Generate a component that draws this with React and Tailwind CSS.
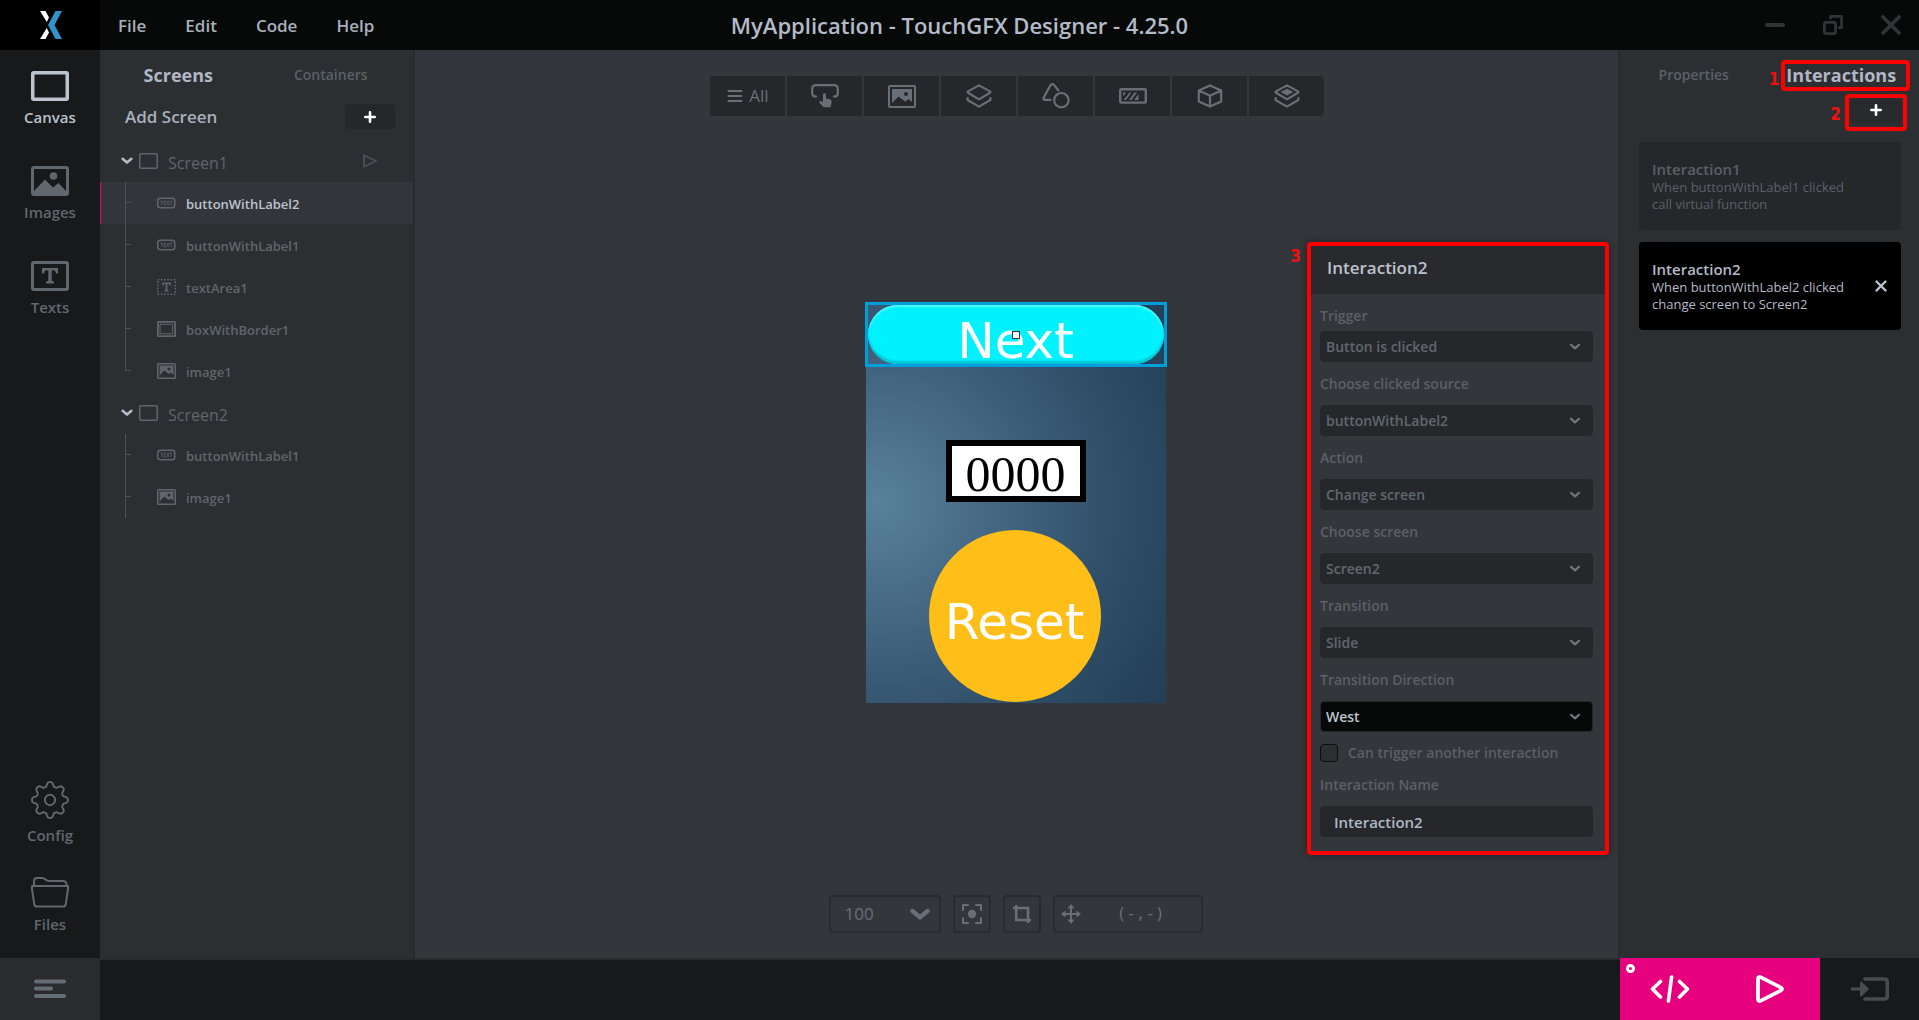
import React from 'react';

const gearPath = (() => {
  const pts = [];
  for (let i = 0; i < 160; i++) {
    const t = (i / 160) * Math.PI * 2;
    const w = Math.cos(8 * t);
    const r = 16.2 + 2.4 * Math.tanh(1.6 * w);
    pts.push(`${(20 + r * Math.sin(t)).toFixed(2)} ${(20 - r * Math.cos(t)).toFixed(2)}`);
  }
  return `M${pts.join('L')}Z`;
})();

function Svg({ w, h, children, className = '' }) {
  return (
    <svg width={w} height={h} viewBox={`0 0 ${w} ${h}`} fill="none" stroke="currentColor" strokeWidth="2" strokeLinecap="round" strokeLinejoin="round" className={`shrink-0 ${className}`} aria-hidden="true">
      {children}
    </svg>
  );
}

const Logo = () => (
  <Svg w={22} h={28}>
    <g stroke="none">
      <path d="M0 0H5.5L9 6.5L6.8 11L0 0Z" fill="#fff" />
      <path d="M0 28H5.5L9 21.5L6.8 17L0 28Z" fill="#fff" />
      <path d="M15.5 0H22L14.5 14L22 28H15.5L8 14Z" fill="#2f94cc" />
    </g>
  </Svg>
);

const CanvasIcon = () => (
  <Svg w={38} h={30}><rect x="1.75" y="1.75" width="34.5" height="26.5" rx="1" strokeWidth="3.5" /></Svg>
);
const ImageIcon = () => (
  <Svg w={38} h={30}>
    <rect x="1.5" y="1.5" width="35" height="27" rx="1.5" strokeWidth="3" />
    <circle cx="22.5" cy="10" r="3.8" fill="currentColor" stroke="none" />
    <path d="M3 25L14 13.5L22 21.5L27.5 17L35 25V28H3Z" fill="currentColor" stroke="none" />
  </Svg>
);
const TextIcon = () => (
  <Svg w={38} h={30}>
    <rect x="1.5" y="1.5" width="35" height="27" rx="1.5" strokeWidth="3" />
    <path d="M11 7H27V12.5H25L24 9.5H20.7V20L23 20.6V22.5H15V20.6L17.3 20V9.5H14L13 12.5H11Z" fill="currentColor" stroke="none" />
  </Svg>
);
const GearIcon = () => (
  <svg width="38" height="38" viewBox="0.5 0.5 39 39" fill="none" stroke="currentColor" strokeWidth="2" aria-hidden="true">
    <path d={gearPath} strokeLinejoin="round" />
    <circle cx="20" cy="20" r="5.3" />
  </svg>
);
const FolderIcon = () => (
  <Svg w={38} h={31}>
    <path d="M3 9V4Q3 1 6 1H11Q13 1 14.5 2.5T18 4H32Q35 4 35.5 7V9" />
    <path d="M1 9H37V12L34.8 27Q34.4 29.6 32 29.6H6Q3.6 29.6 3.2 27L1 12Z" />
  </Svg>
);
const PlusIcon = () => (
  <Svg w={12} h={12}><path d="M6 1.3V10.7M1.3 6H10.7" strokeWidth="2.6" /></Svg>
);
const ChevronWide = () => (
  <Svg w={12} h={8}><path d="M1.6 1.8L6 5.6L10.4 1.8" strokeWidth="2.6" /></Svg>
);
const ChevronSmall = () => (
  <Svg w={12} h={8} className="pointer-events-none"><path d="M2 1.8L6 5.4L10 1.8" strokeWidth="2.2" /></Svg>
);
const ScreenIcon = () => (
  <Svg w={19} h={16}><rect x=".75" y=".75" width="17.5" height="14.5" rx="1" strokeWidth="1.5" /></Svg>
);
const PlayIcon = () => (
  <Svg w={14} h={14}><path d="M1 1.2L13 7L1 12.8Z" strokeWidth="1.8" /></Svg>
);

const treeIcons = {
  button: (
    <Svg w={19} h={16}>
      <rect x=".75" y="3.25" width="17" height="9.5" rx="2.5" strokeWidth="1.5" />
      <g strokeWidth=".8" strokeLinecap="butt">
        <path d="M3.5 6.1H6.1M4.8 6.1V10.1" />
        <path d="M8.9 6.1H7.1V9.9H8.9M7.1 8H8.6" />
        <path d="M9.8 5.9L12 10.1M12 5.9L9.8 10.1" />
        <path d="M12.7 6.1H15.3M14 6.1V10.1" />
      </g>
    </Svg>
  ),
  text: (
    <Svg w={19} h={16}>
      <rect x=".75" y=".75" width="17.5" height="14.5" strokeWidth="1.5" strokeDasharray="1.6 1.6" strokeLinecap="butt" />
      <path d="M5.3 3.6H13.7V6.4H12.5L12 5H10.4V11L11.6 11.4V12.4H7.4V11.4L8.6 11V5H7L6.5 6.4H5.3Z" fill="currentColor" stroke="none" />
    </Svg>
  ),
  box: (
    <Svg w={19} h={16}>
      <rect x=".9" y=".9" width="17.2" height="14.2" rx=".6" strokeWidth="1.8" />
      <rect x="3.4" y="3.3" width="12.2" height="9.4" strokeWidth="1" />
    </Svg>
  ),
  image: (
    <Svg w={19} h={16}>
      <rect x=".75" y=".75" width="17.5" height="14.5" rx=".8" strokeWidth="1.5" />
      <path fillRule="evenodd" d="M2.6 2.6H16.4V12L13.6 9.4L11.8 11L7.2 7.6L2.6 12.4ZM12 4.6A1.5 1.5 0 1 0 12 7.6A1.5 1.5 0 1 0 12 4.6Z" fill="currentColor" stroke="none" />
    </Svg>
  ),
};

const toolbarIcons = [
  ['Buttons', (
    <Svg w={28} h={24}>
      <path d="M5 12.6Q1.2 12.6 1.2 9.5V5Q1.2 1.2 5 1.2H23Q26.8 1.2 26.8 5V9.5Q26.8 12.6 23 12.6" strokeWidth="2.2" />
      <path d="M12 10Q13.5 8.4 15 10V14.4L19.6 15.6Q20.8 16 20.6 17.6L19.6 23.2H12.6L8.2 18.4Q8.4 16.8 10 17L12 18Z" fill="currentColor" stroke="none" />
    </Svg>
  )],
  ['Images', (
    <Svg w={28} h={23}>
      <rect x="1" y="1" width="26" height="21" rx="1" />
      <path fillRule="evenodd" d="M4 4H24V17L20.5 14L17.5 16.8L10.5 11.5L4 18ZM18 7A2 2 0 1 0 18 11A2 2 0 1 0 18 7Z" fill="currentColor" stroke="none" />
    </Svg>
  )],
  ['Containers', (
    <Svg w={26} h={24}>
      <path d="M13 1.4L24 7.4Q25 8 24 8.8L13 15.4L2 8.8Q1 8 2 7.4Z" strokeWidth="2.2" />
      <path d="M1.6 14V16L13 22.6L24.4 16V14" strokeWidth="2.2" />
    </Svg>
  )],
  ['Shapes', (
    <Svg w={28} h={26}>
      <path d="M16.4 7.5L12 1.9Q10.2 .4 8.6 2L1.6 14.8Q.8 16.9 3 16.9H8.6" strokeWidth="2.2" />
      <circle cx="19.4" cy="17.2" r="7.2" strokeWidth="2.2" />
    </Svg>
  )],
  ['Progress indicators', (
    <Svg w={28} h={16}>
      <rect x="1.2" y="1.2" width="25.6" height="13.4" rx="1.2" strokeWidth="2.4" />
      <path d="M4 4.5H7L4 8.5ZM10.5 4.5H12.5L7 12H4.6ZM15.4 4.5H18L12.4 12H10ZM19.5 6V12H15.2Z" fill="currentColor" stroke="none" />
    </Svg>
  )],
  ['Miscellaneous', (
    <Svg w={26} h={24}>
      <path d="M13 1.4L24.2 6.4V17.4L13 22.6L1.8 17.4V6.4ZM1.8 6.4L13 11.8L24.2 6.4M13 11.8V22.4" strokeWidth="2.2" />
    </Svg>
  )],
  ['Custom containers', (
    <Svg w={26} h={24}>
      <path d="M13 1.4L24 7.4Q25 8 24 8.8L13 15.4L2 8.8Q1 8 2 7.4Z" strokeWidth="2.2" />
      <path d="M13 4.8L19.4 8.1L13 11.6L6.6 8.1Z" fill="currentColor" stroke="none" />
      <path d="M1.6 14V16L13 22.6L24.4 16V14" strokeWidth="2.2" />
    </Svg>
  )],
];

function NavItem({ icon, label, active }) {
  return (
    <button className={`flex w-full flex-col items-center gap-1.5 ${active ? 'text-[#bcc3ce]' : 'text-[#60676e]'}`}>
      {icon}
      <span className="text-[15px]/[20px] font-semibold">{label}</span>
    </button>
  );
}

function ScreenRow({ name, play }) {
  return (
    <div className="flex h-[42px] items-center pr-9 pl-[21px] text-[#60656b]">
      <button aria-label={`Collapse ${name}`} className="text-[#b4bbc8]"><ChevronWide /></button>
      <span className="ml-1.5"><ScreenIcon /></span>
      <span className="ml-[10px] flex-1 pt-1 text-base/[20px]">{name}</span>
      {play && <button aria-label={`Run ${name}`} className="text-[#4b5056]"><PlayIcon /></button>}
    </div>
  );
}

function TreeRow({ kind, name, selected, end }) {
  return (
    <div className={`flex h-[42px] border-l ${selected ? 'border-[#e6007e] bg-[#33353a]' : 'border-transparent'}`}>
      <div className="ml-6 w-1.5 text-[#4b5056]">
        <div className="h-[21px] border-b border-l border-current" />
        <div className={`h-[21px] border-l ${end ? 'border-transparent' : 'border-current'}`} />
      </div>
      <div className="ml-[26px] flex items-center gap-[10px] text-[#60656b]">
        {treeIcons[kind]}
        <span className={`pt-0.5 text-[13px]/[18px] font-semibold ${selected ? 'text-[#bcc3ce]' : ''}`}>{name}</span>
      </div>
    </div>
  );
}

function SelectField({ id, label, value, tight, active }) {
  return (
    <div className="pt-3">
      <label htmlFor={id} className={`block text-sm/5 font-semibold text-[#5b6066] ${tight ? 'mb-[5px]' : 'mb-[11px]'}`}>{label}</label>
      <div className="relative flex items-center">
        <select id={id} defaultValue={value} className={`h-[31px] w-full appearance-none rounded border pl-[5px] text-sm font-semibold ${active ? 'border-[#26272b] bg-[#070908] text-[#bcc3ce]' : 'border-[#26272b] bg-[#26272b] text-[#60676e]'}`}>
          <option>{value}</option>
        </select>
        <span className="pointer-events-none absolute right-3 text-[#70777f]"><ChevronSmall /></span>
      </div>
    </div>
  );
}

function InteractionCard({ title, lines, active }) {
  return (
    <div className={`flex h-[88px] items-center justify-between rounded pr-[14px] pl-[13px] ${active ? 'bg-black text-[#b4bbc8]' : 'bg-[#26272b] text-[#5b6066]'}`}>
      <div>
        <h3 className="text-[15px]/[20px] font-semibold">{title}</h3>
        {lines.map((l) => <p key={l} className="text-[13px]/[17px]">{l}</p>)}
      </div>
      {active && (
        <button aria-label={`Delete ${title}`} className="text-[#bcc3ce]">
          <Svg w={12} h={12}><path d="M1.5 1.5L10.5 10.5M10.5 1.5L1.5 10.5" strokeWidth="2.4" /></Svg>
        </button>
      )}
    </div>
  );
}

function Callout({ n, className }) {
  return (
    <span className={`absolute right-full font-['DejaVu_Sans_Condensed','DejaVu_Sans',sans-serif] text-[17px]/[20px] font-bold text-[#f01010] ${className}`}>{n}</span>
  );
}

function Dialog() {
  return (
    <section className="absolute top-48 right-[9px] w-[302px] rounded-sm border-4 border-[#ff0000] bg-[#33363b] shadow-[0_0_8px_rgba(0,0,0,0.4)]">
      <Callout n="3" className="top-0 mr-[10px]" />
      <h2 className="flex h-12 items-center bg-[#292a2d] pb-1 pl-4 text-[17px]/[24px] font-semibold text-[#bcc3ce]">Interaction2</h2>
      <div className="pr-3 pb-[14px] pl-[9px]">
        <SelectField id="trigger" label="Trigger" value="Button is clicked" tight />
        <SelectField id="source" label="Choose clicked source" value="buttonWithLabel2" />
        <SelectField id="action" label="Action" value="Change screen" />
        <SelectField id="screen" label="Choose screen" value="Screen2" />
        <SelectField id="transition" label="Transition" value="Slide" />
        <SelectField id="direction" label="Transition Direction" value="West" active />
        <div className="flex items-center gap-[10px] pt-3">
          <input id="chain" type="checkbox" className="size-[18px] appearance-none rounded border border-[#0c0d0d] bg-[#2c2f32] checked:bg-[#e6007e]" />
          <label htmlFor="chain" className="text-sm/[18px] font-semibold text-[#5b6066]">Can trigger another interaction</label>
        </div>
        <label htmlFor="iname" className="mt-[13px] mb-[11px] block text-sm/5 font-semibold text-[#5b6066]">Interaction Name</label>
        <input id="iname" defaultValue="Interaction2" className="block h-[31px] w-full rounded bg-[#26272b] px-[14px] text-[15px] font-semibold text-[#b0b7c3]" />
      </div>
    </section>
  );
}

function Device() {
  return (
    <div className="relative h-[400px] w-[300px] bg-[radial-gradient(circle_at_4%_50%,#59819c_0%,#3b5c77_48%,#2d4c66_72%,#233e57_100%)]">
      <div className="absolute -top-px -left-px flex h-[65px] w-[302px] border-[3px] border-[#009fdc] font-['DejaVu_Sans',sans-serif]">
        <button className="flex-1 rounded-full bg-[#00f2ff] pt-2.5 text-[50px]/[52px] text-white shadow-[inset_0_-3px_2px_#00c4d4,inset_0_2px_2px_#55f7ff]">Next</button>
        <span className="absolute top-[26px] left-[144px] size-2 border border-[#333] bg-white" />
      </div>
      <div className="absolute top-[137px] left-20 flex h-[62px] w-[140px] items-center justify-center border-[6px] border-black bg-white pt-1.5 font-['Liberation_Serif',serif] text-[50px]/[50px] text-black">0000</div>
      <button className="absolute top-[227px] left-[63px] flex size-[172px] items-center justify-center rounded-full bg-[#ffbe18] pt-3 font-['DejaVu_Sans',sans-serif] text-[50px]/[60px] text-white">Reset</button>
    </div>
  );
}

export default function App() {
  return (
    <div className="flex h-screen flex-col overflow-hidden bg-[#17191a] font-['Open_Sans','Noto_Sans',sans-serif]">
      <header className="flex h-[50px] bg-[#070908] text-[#b4bbc8]">
        <div className="flex w-[100px] items-center justify-center bg-black pl-0.5"><Logo /></div>
        <div className="-ml-[100px] grid flex-1 grid-cols-[1fr_auto_1fr] items-center">
          <nav className="flex gap-[39px] pt-0.5 pl-[118px] text-[17px]/[24px] font-semibold text-[#a9b0bc]">
            <button>File</button><button>Edit</button><button>Code</button><button>Help</button>
          </nav>
          <h1 className="text-[22px]/[30px] font-semibold">MyApplication - TouchGFX Designer - 4.25.0</h1>
          <div className="flex justify-end gap-[38px] pr-[18px] text-[#303337]">
            <button aria-label="Minimize"><Svg w={20} h={20}><path d="M2 10H18" strokeWidth="4" /></Svg></button>
            <button aria-label="Restore"><Svg w={20} h={20}><rect x="1.4" y="7.4" width="11.2" height="11.2" rx="1.5" strokeWidth="2.8" /><path d="M7.5 3.5V1.4H18.6V12.6H16" strokeWidth="2.6" /></Svg></button>
            <button aria-label="Close"><Svg w={20} h={20}><path d="M2 2L18 18M18 2L2 18" strokeWidth="3.8" /></Svg></button>
          </div>
        </div>
      </header>

      <div className="flex min-h-0 flex-1">
        <nav className="flex w-[100px] flex-col justify-between bg-[#17191a] pt-[21px] pb-6">
          <div className="flex flex-col gap-[39px]">
            <NavItem icon={<CanvasIcon />} label="Canvas" active />
            <NavItem icon={<ImageIcon />} label="Images" />
            <NavItem icon={<TextIcon />} label="Texts" />
          </div>
          <div className="flex flex-col gap-8">
            <NavItem icon={<GearIcon />} label="Config" />
            <NavItem icon={<FolderIcon />} label="Files" />
          </div>
        </nav>

        <aside className="w-[315px] border-r-2 border-[#292b2e] bg-[#2c2f32]">
          <div className="grid h-12 grid-cols-2 items-center pt-0.5 pr-1.5 pl-0.5 text-center">
            <button className="text-[18px]/[26px] font-bold text-[#b0b7c3]">Screens</button>
            <button className="text-sm/[24px] font-semibold text-[#5b6066]">Containers</button>
          </div>
          <div className="mt-1.5 mb-[11px] flex items-center justify-between pr-[18px] pl-[25px]">
            <span className="text-[17px]/[25px] font-semibold text-[#a9b0bc]">Add Screen</span>
            <button aria-label="Add screen" className="flex h-[25px] w-[50px] items-center justify-center rounded bg-[#26272b] text-white"><PlusIcon /></button>
          </div>
          <ScreenRow name="Screen1" play />
          <TreeRow kind="button" name="buttonWithLabel2" selected />
          <TreeRow kind="button" name="buttonWithLabel1" />
          <TreeRow kind="text" name="textArea1" />
          <TreeRow kind="box" name="boxWithBorder1" />
          <TreeRow kind="image" name="image1" end />
          <ScreenRow name="Screen2" />
          <TreeRow kind="button" name="buttonWithLabel1" />
          <TreeRow kind="image" name="image1" />
        </aside>

        <main className="relative flex flex-1 flex-col items-center bg-[#33363b] pt-[26px] pb-[25px]">
          <div className="flex gap-0.5 overflow-hidden rounded text-[#686f77]">
            <button className="flex h-10 w-[75px] items-center justify-center gap-1.5 bg-[#26272b] pl-0.5 text-[17px]">
              <Svg w={16} h={14}><path d="M1.5 2H14.5M1.5 7H14.5M1.5 12H14.5" /></Svg>All
            </button>
            {toolbarIcons.map(([name, icon]) => (
              <button key={name} aria-label={name} className="flex h-10 w-[75px] items-center justify-center bg-[#26272b] pl-0.5">{icon}</button>
            ))}
          </div>
          <div className="flex flex-1 items-center pr-0.5 pb-1.5"><Device /></div>
          <div className="flex gap-3 pr-0.5 text-[#686f77]">
            <div className="relative flex w-28 items-center rounded border-2 border-[#292b2e]">
              <select aria-label="Zoom" defaultValue="100" className="h-full w-full appearance-none pl-[14px] text-[17px]"><option>100</option></select>
              <Svg w={20} h={13} className="pointer-events-none absolute right-[9px]"><path d="M2.5 3L10 9.4L17.5 3" strokeWidth="4.4" /></Svg>
            </div>
            <button aria-label="Center" className="flex size-[38px] items-center justify-center rounded border-2 border-[#292b2e]">
              <Svg w={20} h={20}><circle cx="10" cy="10" r="4.2" fill="currentColor" stroke="none" /><path d="M1 6V1H6M14 1H19V6M19 14V19H14M6 19H1V14" /></Svg>
            </button>
            <button aria-label="Crop" className="flex size-[38px] items-center justify-center rounded border-2 border-[#292b2e]">
              <Svg w={20} h={20}><path d="M4.2 1V16H19M1 4H16V19" strokeWidth="2.6" strokeLinecap="butt" strokeLinejoin="miter" /></Svg>
            </button>
            <div className="flex h-[38px] w-[150px] items-center rounded border-2 border-[#292b2e] pl-1.5">
              <Svg w={20} h={20}>
                <path d="M10 3V17M3 10H17" />
                <path d="M10 0L13.5 4.5H6.5ZM10 20L6.5 15.5H13.5ZM0 10L4.5 6.5V13.5ZM20 10L15.5 13.5V6.5Z" fill="currentColor" stroke="none" />
              </Svg>
              <span className="ml-9 font-['DejaVu_Sans_Mono',monospace] text-base">(-,-)</span>
            </div>
          </div>
          <Dialog />
        </main>

        <aside className="w-[301px] border-l-2 border-[#292b2e] bg-[#2c2f32]">
          <div className="grid h-12 grid-cols-2 items-center pt-0.5 pr-1 text-center">
            <button className="text-sm/[24px] font-semibold text-[#5b6066]">Properties</button>
            <div className="relative">
              <button className="text-[18px]/[26px] font-bold text-[#b0b7c3]">Interactions</button>
              <div className="pointer-events-none absolute -top-0.5 left-[13px] h-[31px] w-[129px] rounded-sm border-4 border-[#ff0000]">
                <Callout n="1" className="top-[5px] mr-[5px]" />
              </div>
            </div>
          </div>
          <div className="mb-[19px] flex justify-end pr-[18px]">
            <div className="relative">
              <button aria-label="Add interaction" className="flex h-[25px] w-[50px] items-center justify-center rounded bg-[#292a2d] pb-0.5 text-white"><PlusIcon /></button>
              <div className="pointer-events-none absolute -top-1 -left-1.5 h-[37px] w-[62px] rounded-sm border-4 border-[#ff0000]">
                <Callout n="2" className="top-[6px] mr-2" />
              </div>
            </div>
          </div>
          <div className="flex flex-col gap-3 pr-[18px] pl-[19px]">
            <InteractionCard title="Interaction1" lines={['When buttonWithLabel1 clicked', 'call virtual function']} />
            <InteractionCard title="Interaction2" lines={['When buttonWithLabel2 clicked', 'change screen to Screen2']} active />
          </div>
        </aside>
      </div>

      <footer className="flex h-[62px] bg-[#17191a]">
        <button aria-label="Log" className="flex w-[100px] items-center justify-center bg-[#2a2b2f] text-[#656d74]">
          <Svg w={32} h={20}><path d="M2 2.5H30M2 9.5H17M2 17H30" strokeWidth="4" /></Svg>
        </button>
        <div className="flex-1 border-t-2 border-[#292b2e]" />
        <div className="flex w-[200px] bg-[#e6007e] text-white">
          <button aria-label="Generate code" className="relative flex flex-1 items-center justify-center">
            <span className="absolute top-1.5 left-1.5 size-[9px] rounded-full border-[3px] border-white" />
            <Svg w={40} h={28}><path d="M10.5 6.5L2.5 14L10.5 22M29.5 6.5L37.5 14L29.5 22" strokeWidth="3.6" /><path d="M21.6 2L18.4 26" strokeWidth="3.6" /></Svg>
          </button>
          <button aria-label="Run simulator" className="flex flex-1 items-center justify-center">
            <Svg w={28} h={28}><path d="M2 4Q2 1 5 2.4L24.6 12.4Q27.4 14 24.6 15.6L5 25.6Q2 27 2 24Z" strokeWidth="3.8" /></Svg>
          </button>
        </div>
        <button aria-label="Run target" className="flex w-[99px] items-center justify-center text-[#494b50]">
          <Svg w={38} h={24}>
            <path d="M14 2H33.5Q36.3 2 36.3 5V19Q36.3 22 33.5 22H14" strokeWidth="3.6" />
            <path d="M.5 12H10" strokeWidth="3" /><path d="M9 5.5Q9.5 4 11 5L18 12L11 19Q9.5 20 9 18.5Z" fill="currentColor" stroke="none" />
          </Svg>
        </button>
      </footer>
    </div>
  );
}
